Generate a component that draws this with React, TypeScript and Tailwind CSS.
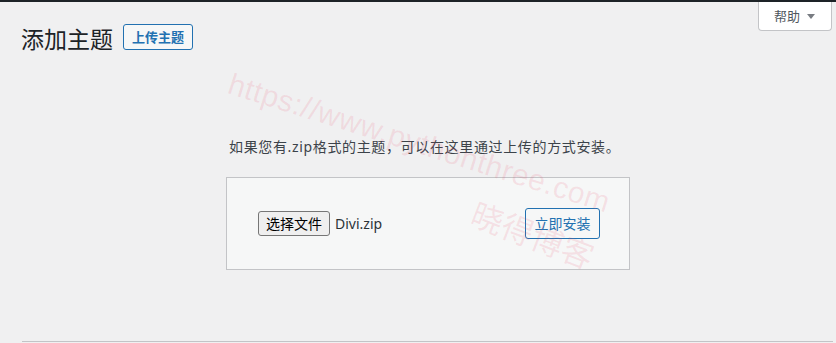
import React from "react";

const cjk = { fontFamily: '"Noto Sans", "Noto Sans CJK SC", sans-serif' };

export default function App() {
  return (
    <div
      className="relative w-[836px] h-[343px] bg-[#f0f0f1] overflow-hidden flex flex-col"
      style={cjk}
    >
      <div className="h-[2px] bg-[#1d2327] shrink-0" />
      <div className="flex items-start justify-between shrink-0">
        <div className="flex items-start pl-[21px] pt-[22px]">
          <h1 className="text-[23px] leading-[30px] font-normal text-[#1d2327]">添加主题</h1>
          <button className="ml-[10px] h-[26px] px-[8px] border border-[#2271b1] rounded-[3px] bg-[#f6f7f7] text-[#2271b1] text-[13px] font-semibold leading-[24px]">
            上传主题
          </button>
        </div>
        <div className="mr-[4px] w-[74px] h-[29px] bg-white border border-t-0 border-[#c3c4c7] rounded-b-[4px] flex items-center pl-[15px]">
          <span className="text-[13px] leading-[20px] text-[#50575e]">帮助</span>
          <svg width="8" height="5" viewBox="0 0 8 5" className="ml-[7px]">
            <path d="M0 0H8L4 5Z" fill="#787c82" />
          </svg>
        </div>
      </div>
      <p className="mt-[83px] ml-[229px] text-[14px] leading-[20px] text-[#3c434a] tracking-[0.65px]">
        如果您有.zip格式的主题，可以在这里通过上传的方式安装。
      </p>
      <div className="mt-[20px] ml-[226px] w-[404px] h-[93px] border border-[#c3c4c7] bg-[#f6f7f7] flex items-center justify-between pl-[31px] pr-[29px] shrink-0">
        <div className="flex items-center">
          <span className="h-[25px] px-[7px] border border-[#767676] rounded-[3px] bg-[#efefef] text-[14px] leading-[23px] text-black">
            选择文件
          </span>
          <span className="ml-[5px] text-[14px] leading-[20px] text-[#2c3338]">Divi.zip</span>
        </div>
        <button className="w-[75px] h-[31px] border border-[#2271b1] rounded-[3px] bg-[#f6f7f7] text-[#2271b1] text-[14px] leading-[29px] flex items-center justify-center">
          立即安装
        </button>
      </div>
      <div className="mt-auto mb-[1px] ml-[22px] mr-[3px] h-[1px] bg-[#c3c4c7] shrink-0" />

      <div
        className="pointer-events-none absolute left-[234px] top-[68px] origin-top-left rotate-[17.5deg] whitespace-nowrap text-[30px] leading-[32px] tracking-[0.5px] text-[rgba(235,70,100,0.13)]"
        style={{ fontFamily: '"Liberation Sans", Arial, sans-serif' }}
      >
        https://www.pythonthree.com
      </div>
      <div
        className="pointer-events-none absolute left-[480px] top-[194px] origin-top-left rotate-[21deg] whitespace-nowrap text-[32px] leading-[36px] text-[rgba(235,70,100,0.13)]"
        style={{ fontFamily: '"Noto Sans CJK SC", sans-serif' }}
      >
        晓得博客
      </div>
    </div>
  );
}
